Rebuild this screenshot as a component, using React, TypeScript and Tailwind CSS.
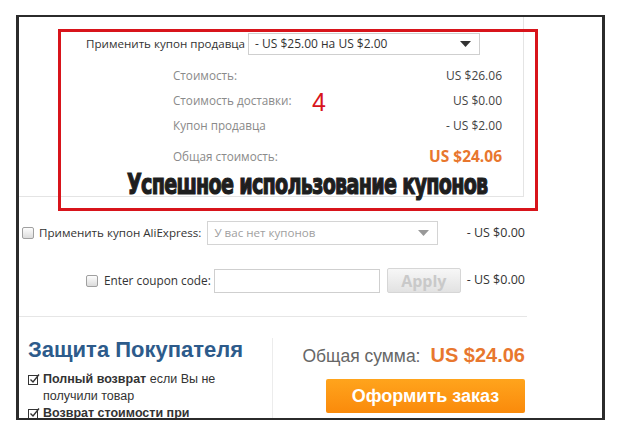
import React from "react";

const Arrow = ({ color = "#333" }: { color?: string }) => (
  <svg width="11" height="6" viewBox="0 0 11 6">
    <path d="M0 0H11L5.5 6Z" fill={color} />
  </svg>
);

const Checkbox = () => (
  <span className="inline-block w-[12px] h-[12px] rounded-[2px] border border-[#a0a0a0] bg-gradient-to-b from-[#fdfdfd] to-[#dcdcdc] shrink-0" />
);

const Tick = () => (
  <svg width="12" height="12" viewBox="0 0 12 12" className="shrink-0">
    <rect x="0.5" y="2.5" width="9" height="9" fill="none" stroke="#333" strokeWidth="1" />
    <path d="M2.5 6.5L5 9L11 1.5" fill="none" stroke="#333" strokeWidth="1.4" />
  </svg>
);

const PriceRow = ({ label, value, className = "" }: { label: string; value: string; className?: string }) => (
  <div className={`flex items-center justify-between h-[25px] pl-[154px] pr-[21px] ${className}`}>
    <span className="text-[11.7px] text-[#8a8a8a]">{label}</span>
    <span className="text-[12px] text-[#444]">{value}</span>
  </div>
);

export default function App() {
  return (
    <div className="relative w-[623px] h-[428px] bg-white overflow-hidden pl-[16px] pt-[15px] font-['Open_Sans','Liberation_Sans',sans-serif]">
      <div className="w-[589px] h-[405px] border-[#2b2b2b] border-l-[3px] border-t-[2px] border-r-[3px] border-b-[2px] overflow-hidden">
        {/* seller coupon */}
        <div className="w-[505px] h-[180px] border-r border-b border-[#e4e4e4] flex flex-col">
          <div className="flex items-center mt-[16px] h-[22px]">
            <span className="w-[226px] text-right text-[11.6px] text-[#333] whitespace-nowrap">Применить купон продавца</span>
            <div className="ml-[3px] w-[232px] h-[22px] border border-[#cfcfcf] flex items-center justify-between pl-[6px] pr-[8px]">
              <span className="text-[12px] text-[#333]">- US $25.00 на US $2.00</span>
              <Arrow />
            </div>
          </div>
          <PriceRow className="mt-[8px]" label="Стоимость:" value="US $26.06" />
          <PriceRow label="Стоимость доставки:" value="US $0.00" />
          <PriceRow label="Купон продавца" value="- US $2.00" />
          <div className="flex items-center justify-between h-[25px] pl-[154px] pr-[21px] mt-[6px]">
            <span className="text-[11.7px] text-[#8a8a8a]">Общая стоимость:</span>
            <span className="text-[15.5px] font-bold text-[#e8772e]">US $24.06</span>
          </div>
        </div>

        {/* aliexpress coupon */}
        <div className="w-[508px] h-[120px] border-b border-[#e6e6e6] flex flex-col">
          <div className="flex items-center h-[24px] mt-[24px] pl-[3px] pr-[2px]">
            <Checkbox />
            <span className="ml-[5px] text-[11.6px] text-[#333] whitespace-nowrap">Применить купон AliExpress:</span>
            <div className="ml-[6px] w-[231px] h-[24px] border border-[#d4d4d4] flex items-center justify-between pl-[6px] pr-[8px] shrink-0">
              <span className="text-[11.6px] text-[#a0a0a0]">У вас нет купонов</span>
              <Arrow color="#999" />
            </div>
            <span className="ml-auto text-[12.5px] text-[#333] whitespace-nowrap">- US $0.00</span>
          </div>
          <div className="flex items-center h-[25px] mt-[23px] pl-[67px] pr-[2px]">
            <Checkbox />
            <span className="ml-[6px] text-[11.8px] text-[#333] whitespace-nowrap">Enter coupon code:</span>
            <div className="ml-[3px] w-[166px] h-[24px] border border-[#cfcfcf] shrink-0" />
            <div className="ml-[7px] w-[74px] h-[25px] rounded-[2px] border border-[#d6d6d6] bg-gradient-to-b from-[#f7f7f7] to-[#e2e2e2] flex items-center justify-center shrink-0">
              <span className="text-[16px] font-bold text-[#c9c9c9]">Apply</span>
            </div>
            <span className="ml-auto text-[12.5px] text-[#333] whitespace-nowrap">- US $0.00</span>
          </div>
        </div>

        {/* buyer protection + total */}
        <div className="flex w-[508px]">
          <div className="w-[253px] pl-[9px] pt-[20px] font-['Liberation_Sans',sans-serif]">
            <div className="text-[22px] font-bold text-[#2d5b8b] leading-[26px] whitespace-nowrap">Защита Покупателя</div>
            <div className="mt-[8px] text-[12.5px] text-[#333] leading-[17px]">
              <div className="flex items-start gap-[3px]">
                <span className="mt-[2px]"><Tick /></span>
                <span><b>Полный возврат</b> если Вы не<br />получили товар</span>
              </div>
              <div className="flex items-start gap-[3px]">
                <span className="mt-[2px]"><Tick /></span>
                <span><b>Возврат стоимости при</b></span>
              </div>
            </div>
          </div>
          <div className="mt-[21px] h-[90px] border-l border-[#ececec]" />
          <div className="flex-1 flex flex-col items-end pr-[2px] pt-[23px] font-['Liberation_Sans',sans-serif]">
            <div className="flex items-baseline gap-[10px] h-[24px] whitespace-nowrap">
              <span className="text-[17.5px] text-[#666]">Общая сумма:</span>
              <span className="text-[20px] font-bold text-[#e8772e]">US $24.06</span>
            </div>
            <div className="mt-[15px] w-[199px] h-[34px] rounded-[2px] bg-gradient-to-b from-[#ffa41c] to-[#fa8a0a] flex items-center justify-center">
              <span className="text-[18px] font-bold text-white">Оформить заказ</span>
            </div>
          </div>
        </div>
      </div>

      {/* annotation */}
      <div className="absolute left-[58px] top-[29px] w-[480px] h-[182px] border-[3px] border-[#d8141b] pointer-events-none" />
      <span className="absolute left-[312px] top-[84px] text-[25px] text-[#d8141b] font-['Liberation_Sans',sans-serif]">4</span>
      <span className="absolute left-[127px] top-[170px] leading-none text-[29px] font-bold text-[#1e1e1e] font-['DejaVu_Sans_Condensed',sans-serif] tracking-[-1px] whitespace-nowrap origin-left scale-x-[0.735] [-webkit-text-stroke:1.2px_#1e1e1e]">Успешное использование купонов</span>
    </div>
  );
}
